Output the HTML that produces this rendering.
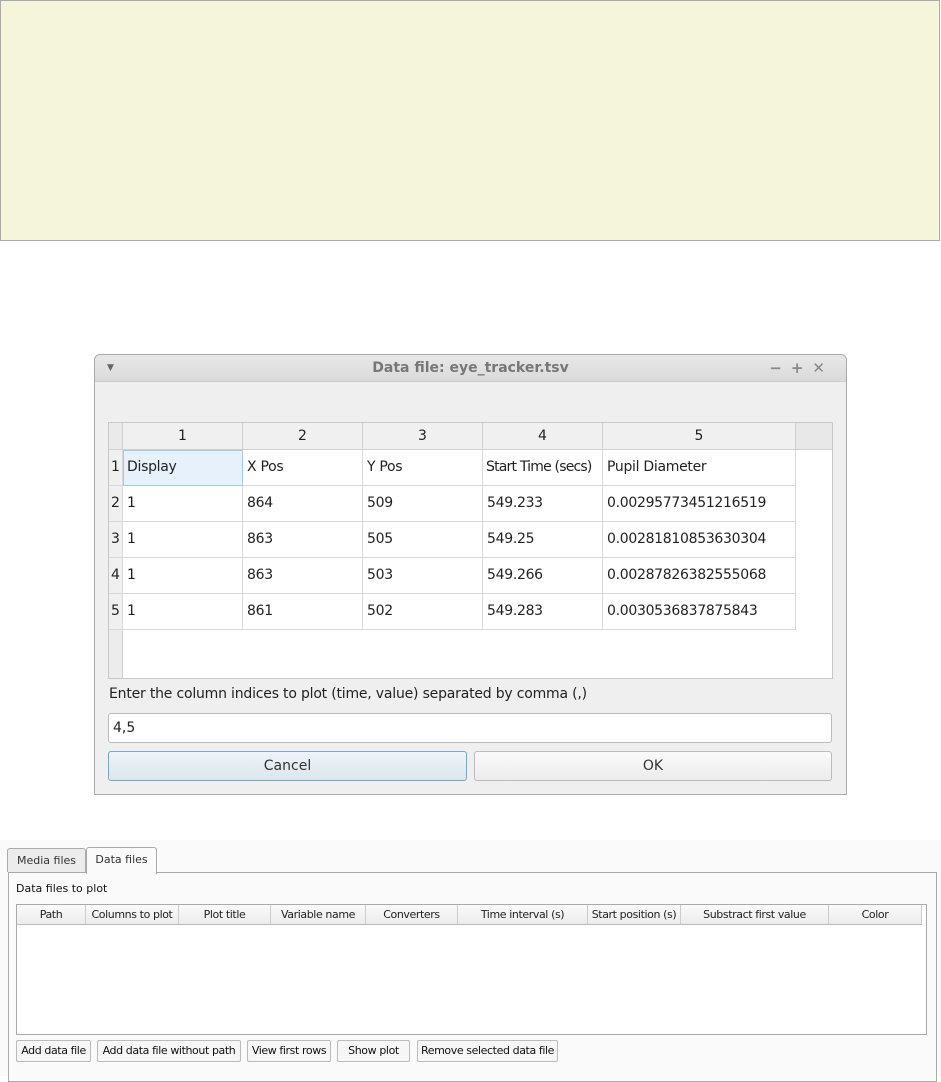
<!DOCTYPE html>
<html><head><meta charset="utf-8"><style>
*{box-sizing:border-box;margin:0;padding:0}
body{width:941px;height:1076px;background:#fff;font-family:"DejaVu Sans","Liberation Sans",sans-serif;position:relative;overflow:hidden;color:#333;white-space:nowrap}
.a{position:absolute}
.top{left:0;top:0;width:940px;height:241px;background:#f5f5dc;border:1px solid #aaa}
.dlg{left:94px;top:354px;width:753px;height:441px;background:#efefef;border:1px solid #aaa;border-radius:6px 6px 0 0}
.tb{left:0;top:0;width:751px;height:27px;background:linear-gradient(#e8e8e8,#dadada);border-radius:6px 6px 0 0;border-bottom:1px solid #ccc;font-size:14px;font-weight:bold;color:#777;text-align:center;line-height:27px}
.tbl{left:108px;top:422px;width:725px;height:257px;background:#fff;border:1px solid #c8c8c8}
.c{position:absolute;font-size:14px;line-height:35px;padding-left:4px;border-right:1px solid #d8d8d8;border-bottom:1px solid #d8d8d8;color:#222;letter-spacing:-0.3px;overflow:hidden}
.h{position:absolute;top:0;height:27px;background:#f0f0f0;border-right:1px solid #d0d0d0;border-bottom:1px solid #d0d0d0;text-align:center;font-size:14px;line-height:27px;color:#222}
.btn{position:absolute;font-size:14px;text-align:center;line-height:28px;border:1px solid #bbb;border-radius:3px;background:linear-gradient(#fafafa,#ececec);color:#333}
.sb{position:absolute;font-size:11px;border:1px solid #bbb;border-radius:2px;background:#f6f6f6;text-align:center;line-height:20px;height:22px;color:#111;letter-spacing:-0.4px;overflow:hidden}
.bh{position:absolute;top:0;height:20px;font-size:11px;line-height:20px;text-align:center;border-right:1px solid #ccc;background:linear-gradient(#fafafa,#ececec);border-bottom:1px solid #bbb;color:#222;letter-spacing:-0.4px;overflow:hidden}
</style></head><body>
<div class="a top"></div>
<div class="a dlg">
 <div class="a tb">Data file: eye_tracker.tsv
  <span style="position:absolute;left:12px;top:0;font-size:9px;color:#666">▼</span>
  <span style="position:absolute;right:12px;top:0;font-size:15px;color:#888;letter-spacing:9px">−+✕</span>
 </div>
</div>
<div class="a tbl">
 <div class="h" style="left:0;width:14px;background:#eaeaea"></div>
 <div class="h" style="left:14px;width:120px">1</div>
 <div class="h" style="left:134px;width:120px">2</div>
 <div class="h" style="left:254px;width:120px">3</div>
 <div class="h" style="left:374px;width:120px">4</div>
 <div class="h" style="left:494px;width:193px">5</div>
 <div class="h" style="left:687px;width:36px;border-right:none;background:#e8e8e8"></div>
 <div class="a" style="left:0;top:27px;width:14px;height:228px;background:#ececec;border-right:1px solid #d0d0d0"></div>
 <div id="rows"></div>
</div>
<script>
var d=[["Display","X Pos","Y Pos","Start Time (secs)","Pupil Diameter"],["1","864","509","549.233","0.00295773451216519"],["1","863","505","549.25","0.00281810853630304"],["1","863","503","549.266","0.00287826382555068"],["1","861","502","549.283","0.0030536837875843"]];
var L=[14,134,254,374,494],W=[120,120,120,120,193],h="";
for(var r=0;r<5;r++){var t=27+r*36;h+='<div class="c" style="left:0;top:'+t+'px;width:14px;height:36px;padding-left:2px;background:#f0f0f0">'+(r+1)+'</div>';
for(var c=0;c<5;c++){var bg=(r==0&&c==0)?"background:#e6f1fb;outline:1px solid #a8c8e0;outline-offset:-1px;":"";var ls=(r==0&&c==3)?"letter-spacing:-0.8px;padding-left:3px;":"";h+='<div class="c" style="left:'+L[c]+'px;top:'+t+'px;width:'+W[c]+'px;height:36px;'+bg+ls+'">'+d[r][c]+'</div>';}}
document.getElementById("rows").innerHTML=h;
</script>
<div class="a" style="left:109px;top:686px;font-size:14px;color:#222;letter-spacing:-0.2px">Enter the column indices to plot (time, value) separated by comma (,)</div>
<div class="a" style="left:108px;top:713px;width:724px;height:30px;background:#fff;border:1px solid #bbb;border-radius:3px;font-size:14px;line-height:28px;padding-left:4px;color:#222">4,5</div>
<div class="btn" style="left:108px;top:751px;width:359px;height:30px;border-color:#7aa7c7;background:linear-gradient(#eef4f8,#dbe6ee)">Cancel</div>
<div class="btn" style="left:474px;top:751px;width:358px;height:30px">OK</div>

<div class="a" style="left:0;top:840px;width:941px;height:236px;background:#fafafa"></div>
<div class="a" style="left:8px;top:872px;width:929px;height:210px;border:1px solid #aaa;background:#fafafa"></div>
<div class="a" style="left:7px;top:848px;width:79px;height:24px;border:1px solid #aaa;border-bottom:none;background:#ececec;font-size:11px;line-height:24px;text-align:center;border-radius:3px 3px 0 0">Media files</div>
<div class="a" style="left:86px;top:847px;width:71px;height:27px;border:1px solid #aaa;border-bottom:none;background:#fafafa;font-size:11px;line-height:24px;text-align:center;border-radius:3px 3px 0 0">Data files</div>
<div class="a" style="left:16px;top:882px;font-size:11px;color:#111">Data files to plot</div>
<div class="a" style="left:16px;top:904px;width:911px;height:131px;background:#fff;border:1px solid #aaa">
 <div class="bh" style="left:0;width:69px">Path</div>
 <div class="bh" style="left:69px;width:93px">Columns to plot</div>
 <div class="bh" style="left:162px;width:92px">Plot title</div>
 <div class="bh" style="left:254px;width:95px">Variable name</div>
 <div class="bh" style="left:349px;width:92px">Converters</div>
 <div class="bh" style="left:441px;width:130px">Time interval (s)</div>
 <div class="bh" style="left:571px;width:93px">Start position (s)</div>
 <div class="bh" style="left:664px;width:148px">Substract first value</div>
 <div class="bh" style="left:812px;width:93px">Color</div>
</div>
<div class="sb" style="left:16px;top:1040px;width:75px">Add data file</div>
<div class="sb" style="left:97px;top:1040px;width:144px">Add data file without path</div>
<div class="sb" style="left:247px;top:1040px;width:84px">View first rows</div>
<div class="sb" style="left:337px;top:1040px;width:73px">Show plot</div>
<div class="sb" style="left:417px;top:1040px;width:141px">Remove selected data file</div>
</body></html>
